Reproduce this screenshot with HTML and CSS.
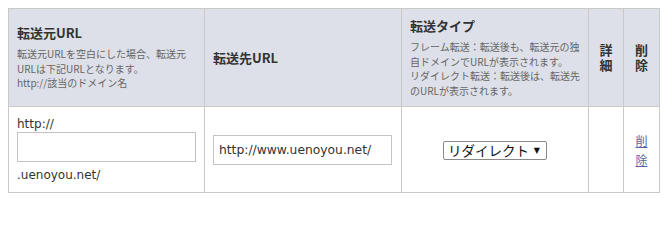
FILE: index.html
```html
<!DOCTYPE html>
<html lang="ja">
<head>
<meta charset="utf-8">
<link rel="stylesheet" href="styles.css">
</head>
<body>
<table class="fwd">
  <colgroup>
    <col class="w-src">
    <col class="w-dst">
    <col class="w-type">
    <col class="w-detail">
    <col class="w-del">
  </colgroup>
  <thead>
    <tr>
      <th>
        <div class="th-title">転送元URL</div>
        <div class="th-desc">転送元URLを空白にした場合、転送元<br>URLは下記URLとなります。<br>http://該当のドメイン名</div>
      </th>
      <th><div class="th-title">転送先URL</div></th>
      <th>
        <div class="th-title">転送タイプ</div>
        <div class="th-desc">フレーム転送：転送後も、転送元の独<br>自ドメインでURLが表示されます。<br>リダイレクト転送：転送後は、転送先<br>のURLが表示されます。</div>
      </th>
      <th class="narrow"><div class="th-title stack"><span class="ch">詳</span><span class="ch">細</span></div></th>
      <th class="narrow"><div class="th-title stack"><span class="ch">削</span><span class="ch">除</span></div></th>
    </tr>
  </thead>
  <tbody>
    <tr>
      <td>
        <div class="src-stack">
          <span class="lbl">http://</span>
          <input class="txt" type="text" value="">
          <span class="lbl">.uenoyou.net/</span>
        </div>
      </td>
      <td><input class="txt" type="text" value="http://www.uenoyou.net/"></td>
      <td class="center">
        <span class="sel"><span class="sel-text">リダイレクト</span><span class="sel-arrow">▼</span></span>
      </td>
      <td></td>
      <td class="center"><a class="del" href="#">削<br>除</a></td>
    </tr>
  </tbody>
</table>
</body>
</html>
```

FILE: styles.css
```css
html, body {
  margin: 0;
  padding: 0;
  background: #ffffff;
}
body {
  padding: 8px;
  font-family: "DejaVu Sans", "Noto Sans CJK JP", sans-serif;
  color: #333333;
}
.fwd {
  border-collapse: collapse;
  width: 652px;
  table-layout: fixed;
}
.w-src { width: 196px; }
.w-dst { width: 197px; }
.w-type { width: 187px; }
.w-detail { width: 35px; }
.w-del { width: 36px; }
.fwd th, .fwd td {
  border: 1px solid #c9c9c9;
  vertical-align: middle;
  text-align: left;
  overflow: hidden;
}
.fwd th {
  background: #dde0e8;
  padding: 8px 8px;
  font-weight: normal;
}
.fwd th.narrow {
  padding: 8px 0;
  text-align: center;
}
.th-title {
  font-family: "Noto Sans CJK JP", sans-serif;
  font-weight: bold;
  font-size: 13px;
  line-height: 18px;
  color: #333333;
}
.th-title.stack {
  display: flex;
  flex-direction: column;
  align-items: center;
  gap: 1px;
  line-height: 14px;
}
.th-desc {
  margin-top: 5px;
  font-family: "Noto Sans CJK JP", sans-serif;
  font-size: 10px;
  line-height: 14.5px;
  color: #666666;
  white-space: nowrap;
}
.fwd td {
  padding: 8px 8px;
  height: 69px;
}
.fwd td.center {
  text-align: center;
}
.src-stack {
  display: flex;
  flex-direction: column;
  align-items: flex-start;
}
.lbl {
  font-size: 12px;
  line-height: 16px;
  color: #333333;
}
.src-stack .txt {
  margin: 0 0 5px 0;
}
.txt {
  box-sizing: border-box;
  width: 179px;
  height: 30px;
  margin: 0;
  padding: 0 5px;
  border: 1px solid #c3c3c3;
  border-radius: 0;
  background: #ffffff;
  font-family: "DejaVu Sans", sans-serif;
  font-size: 12.3px;
  color: #333333;
  outline: none;
}
.sel {
  display: inline-flex;
  align-items: center;
  justify-content: space-between;
  box-sizing: border-box;
  width: 104px;
  height: 19px;
  border: 1px solid #8a8a8a;
  border-radius: 2px;
  background: #ffffff;
  padding: 0 6px 0 4px;
  vertical-align: middle;
}
.sel-text {
  font-family: "Noto Sans CJK JP", sans-serif;
  font-size: 13.5px;
  line-height: 17px;
  color: #111111;
}
.sel-arrow {
  font-family: "DejaVu Sans", sans-serif;
  font-size: 8px;
  line-height: 17px;
  color: #111111;
}
.del {
  font-family: "Noto Sans CJK JP", sans-serif;
  font-size: 12px;
  line-height: 17px;
  color: #5566aa;
  text-decoration: underline;
}
```
